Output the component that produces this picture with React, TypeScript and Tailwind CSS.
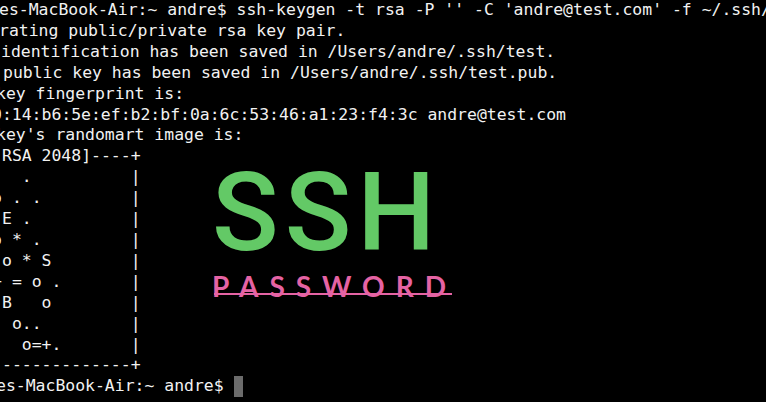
const head = [
  { text: "es-MacBook-Air:~ andre$ ssh-keygen -t rsa -P '' -C 'andre@test.com' -f ~/.ssh/test", cls: "-ml-[1px]" },
  { text: "rating public/private rsa key pair.", cls: "-ml-[1px]" },
  { text: "identification has been saved in /Users/andre/.ssh/test.", cls: "ml-[1px]" },
  { text: "public key has been saved in /Users/andre/.ssh/test.pub.", cls: "ml-[3px]" },
  { text: "key fingerprint is:", cls: "-ml-[4px]" },
  { text: "0:14:b6:5e:ef:b2:bf:0a:6c:53:46:a1:23:f4:3c andre@test.com", cls: "-ml-[8px]" },
  { text: "key's randomart image is:", cls: "-ml-[4px]" },
];

// randomart box, 19 columns each
const art = [
  "+--[ RSA 2048]----+",
  "|      .          |",
  "|   o . .         |",
  "|    E .          |",
  "|   o * .         |",
  "|    o * S        |",
  "|   + = o .       |",
  "|    B   o        |",
  "|     o..         |",
  "|      o=+.       |",
  "+-----------------+",
];

export default function App() {
  return (
    <div className="w-[766px] h-[402px] overflow-hidden bg-black text-[#f2f2f2] font-['DejaVu_Sans_Mono',monospace] text-[16.45px] leading-[20.9px] whitespace-pre">
      {head.map((line, i) => (
        <div key={i} className={line.cls}>
          {line.text}
        </div>
      ))}

      <div className="flex items-start">
        <div className="-ml-[47.5px] shrink-0">
          {art.map((row, i) => (
            <div key={i}>{row}</div>
          ))}
        </div>

        <div className="ml-[71.5px] flex flex-col items-start">
          <div className="mt-[11.3px] font-['Roboto',sans-serif] font-medium text-[110px] leading-none tracking-[6px] text-[#63c966]">
            SSH
          </div>
          <div className="relative mt-[4px] font-['Lato',sans-serif] font-bold text-[28px] leading-none tracking-[11px] text-[#e563a4]">
            PASSWORD
            <span className="absolute left-[2px] top-[21px] h-[2px] w-[238px] bg-[#e563a4]" />
          </div>
        </div>
      </div>

      <div className="-ml-[4px]">
        es-MacBook-Air:~ andre${" "}
        <span className="inline-block w-[9.9px] h-[20.9px] align-top bg-[#6b6b6b]" />
      </div>
    </div>
  );
}
